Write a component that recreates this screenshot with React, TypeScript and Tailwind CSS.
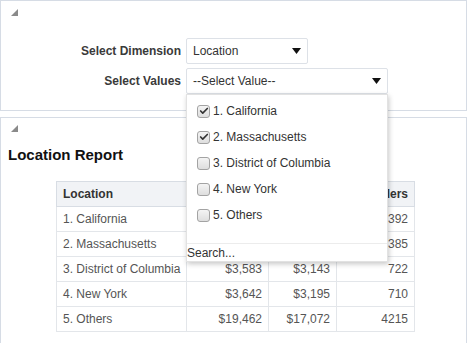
import { Check } from 'lucide-react';

const locations = [
  { name: '1. California', checked: true },
  { name: '2. Massachusetts', checked: true },
  { name: '3. District of Columbia', checked: false },
  { name: '4. New York', checked: false },
  { name: '5. Others', checked: false },
];

const rows = [
  ['1. California', '$15,810', '$13,872', '1392'],
  ['2. Massachusetts', '$6,204', '$5,441', '1385'],
  ['3. District of Columbia', '$3,583', '$3,143', '722'],
  ['4. New York', '$3,642', '$3,195', '710'],
  ['5. Others', '$19,462', '$17,072', '4215'],
];

function Corner() {
  return (
    <svg width="7" height="7" viewBox="0 0 7 7" className="block">
      <polygon points="7,0 7,7 0,7" fill="#8a8a8a" />
    </svg>
  );
}

function Caret() {
  return (
    <svg width="9" height="6" viewBox="0 0 9 6" className="block">
      <polygon points="0,0 9,0 4.5,6" fill="#111" />
    </svg>
  );
}

function Box({ checked }: { checked: boolean }) {
  return (
    <span className="flex h-[13px] w-[13px] items-center justify-center rounded-[3px] border border-[#a3a3a3] bg-gradient-to-b from-[#f4f4f4] to-[#dedede]">
      {checked && <Check className="h-[10px] w-[10px] text-[#333]" strokeWidth={4} />}
    </span>
  );
}

export default function App() {
  return (
    <div className="h-[343px] w-[470px] overflow-hidden bg-white font-['Liberation_Sans',Arial,sans-serif] text-[12px] text-[#333]">
      {/* Prompt panel */}
      <div className="h-[111px] w-[467px] border border-[#d6dce5] pl-[10px] pt-2">
        <Corner />
        <div className="mt-[22px] -ml-[10px]">
          <div className="flex items-center">
            <div className="w-[181px] pr-[1px] text-right font-bold text-[#3a3a3a]">Select Dimension</div>
            <div className="ml-1 flex h-[26px] w-[122px] items-center justify-between rounded-[2px] border border-[#dde1e7] bg-white pl-[6px] pr-[6px]">
              <span>Location</span>
              <Caret />
            </div>
          </div>
          <div className="mt-1 flex items-center">
            <div className="w-[181px] pr-[1px] text-right font-bold text-[#3a3a3a]">Select Values</div>
            <div className="relative z-10 ml-1 flex h-[26px] w-[202px] items-center justify-between rounded-[2px] border border-[#dde1e7] bg-white pl-[6px] pr-[6px]">
              <span>--Select Value--</span>
              <Caret />
              <div className="absolute left-[-1px] top-[25px] h-[168px] w-[202px] border border-[#e2e2e2] bg-white shadow-[1px_2px_5px_rgba(0,0,0,0.22)]">
                <ul className="pt-[3px]">
                  {locations.map((l) => (
                    <li key={l.name} className="flex h-[26px] items-center gap-[3px] pl-[10px]">
                      <Box checked={l.checked} />
                      <span>{l.name}</span>
                    </li>
                  ))}
                </ul>
                <div className="mt-[15px] flex h-[19px] items-center border-t border-[#ececec] text-[#333]">
                  Search...
                </div>
              </div>
            </div>
          </div>
        </div>
      </div>

      {/* Report panel */}
      <div className="mt-[6px] h-[240px] w-[467px] border border-[#d6dce5] pl-[10px] pt-[7px]">
        <Corner />
        <h1 className="-ml-[3px] mt-[14px] text-[15px] font-bold leading-[18px] text-[#111]">Location Report</h1>
        <table className="ml-[45px] mt-[17px] w-[358px] table-fixed border-collapse whitespace-nowrap border border-[#d8dde4] text-[#555]">
          <colgroup>
            <col className="w-[130px]" />
            <col className="w-[82px]" />
            <col className="w-[68px]" />
            <col className="w-[78px]" />
          </colgroup>
          <thead>
            <tr className="h-[25px] bg-[#f1f3f6] text-left font-bold text-[#333]">
              <th className="border border-[#d8dde4] px-[6px]">Location</th>
              <th className="border border-[#d8dde4] px-[6px] text-right">Revenue</th>
              <th className="border border-[#d8dde4] px-[6px] text-right">Cost</th>
              <th className="border border-[#d8dde4] px-[6px] text-right">Orders</th>
            </tr>
          </thead>
          <tbody>
            {rows.map((r) => (
              <tr key={r[0]} className="h-[25px]">
                <td className="border border-[#e3e6ea] px-[6px]">{r[0]}</td>
                <td className="border border-[#e3e6ea] px-[6px] text-right">{r[1]}</td>
                <td className="border border-[#e3e6ea] px-[6px] text-right">{r[2]}</td>
                <td className="border border-[#e3e6ea] px-[6px] text-right">{r[3]}</td>
              </tr>
            ))}
          </tbody>
        </table>
      </div>
    </div>
  );
}
